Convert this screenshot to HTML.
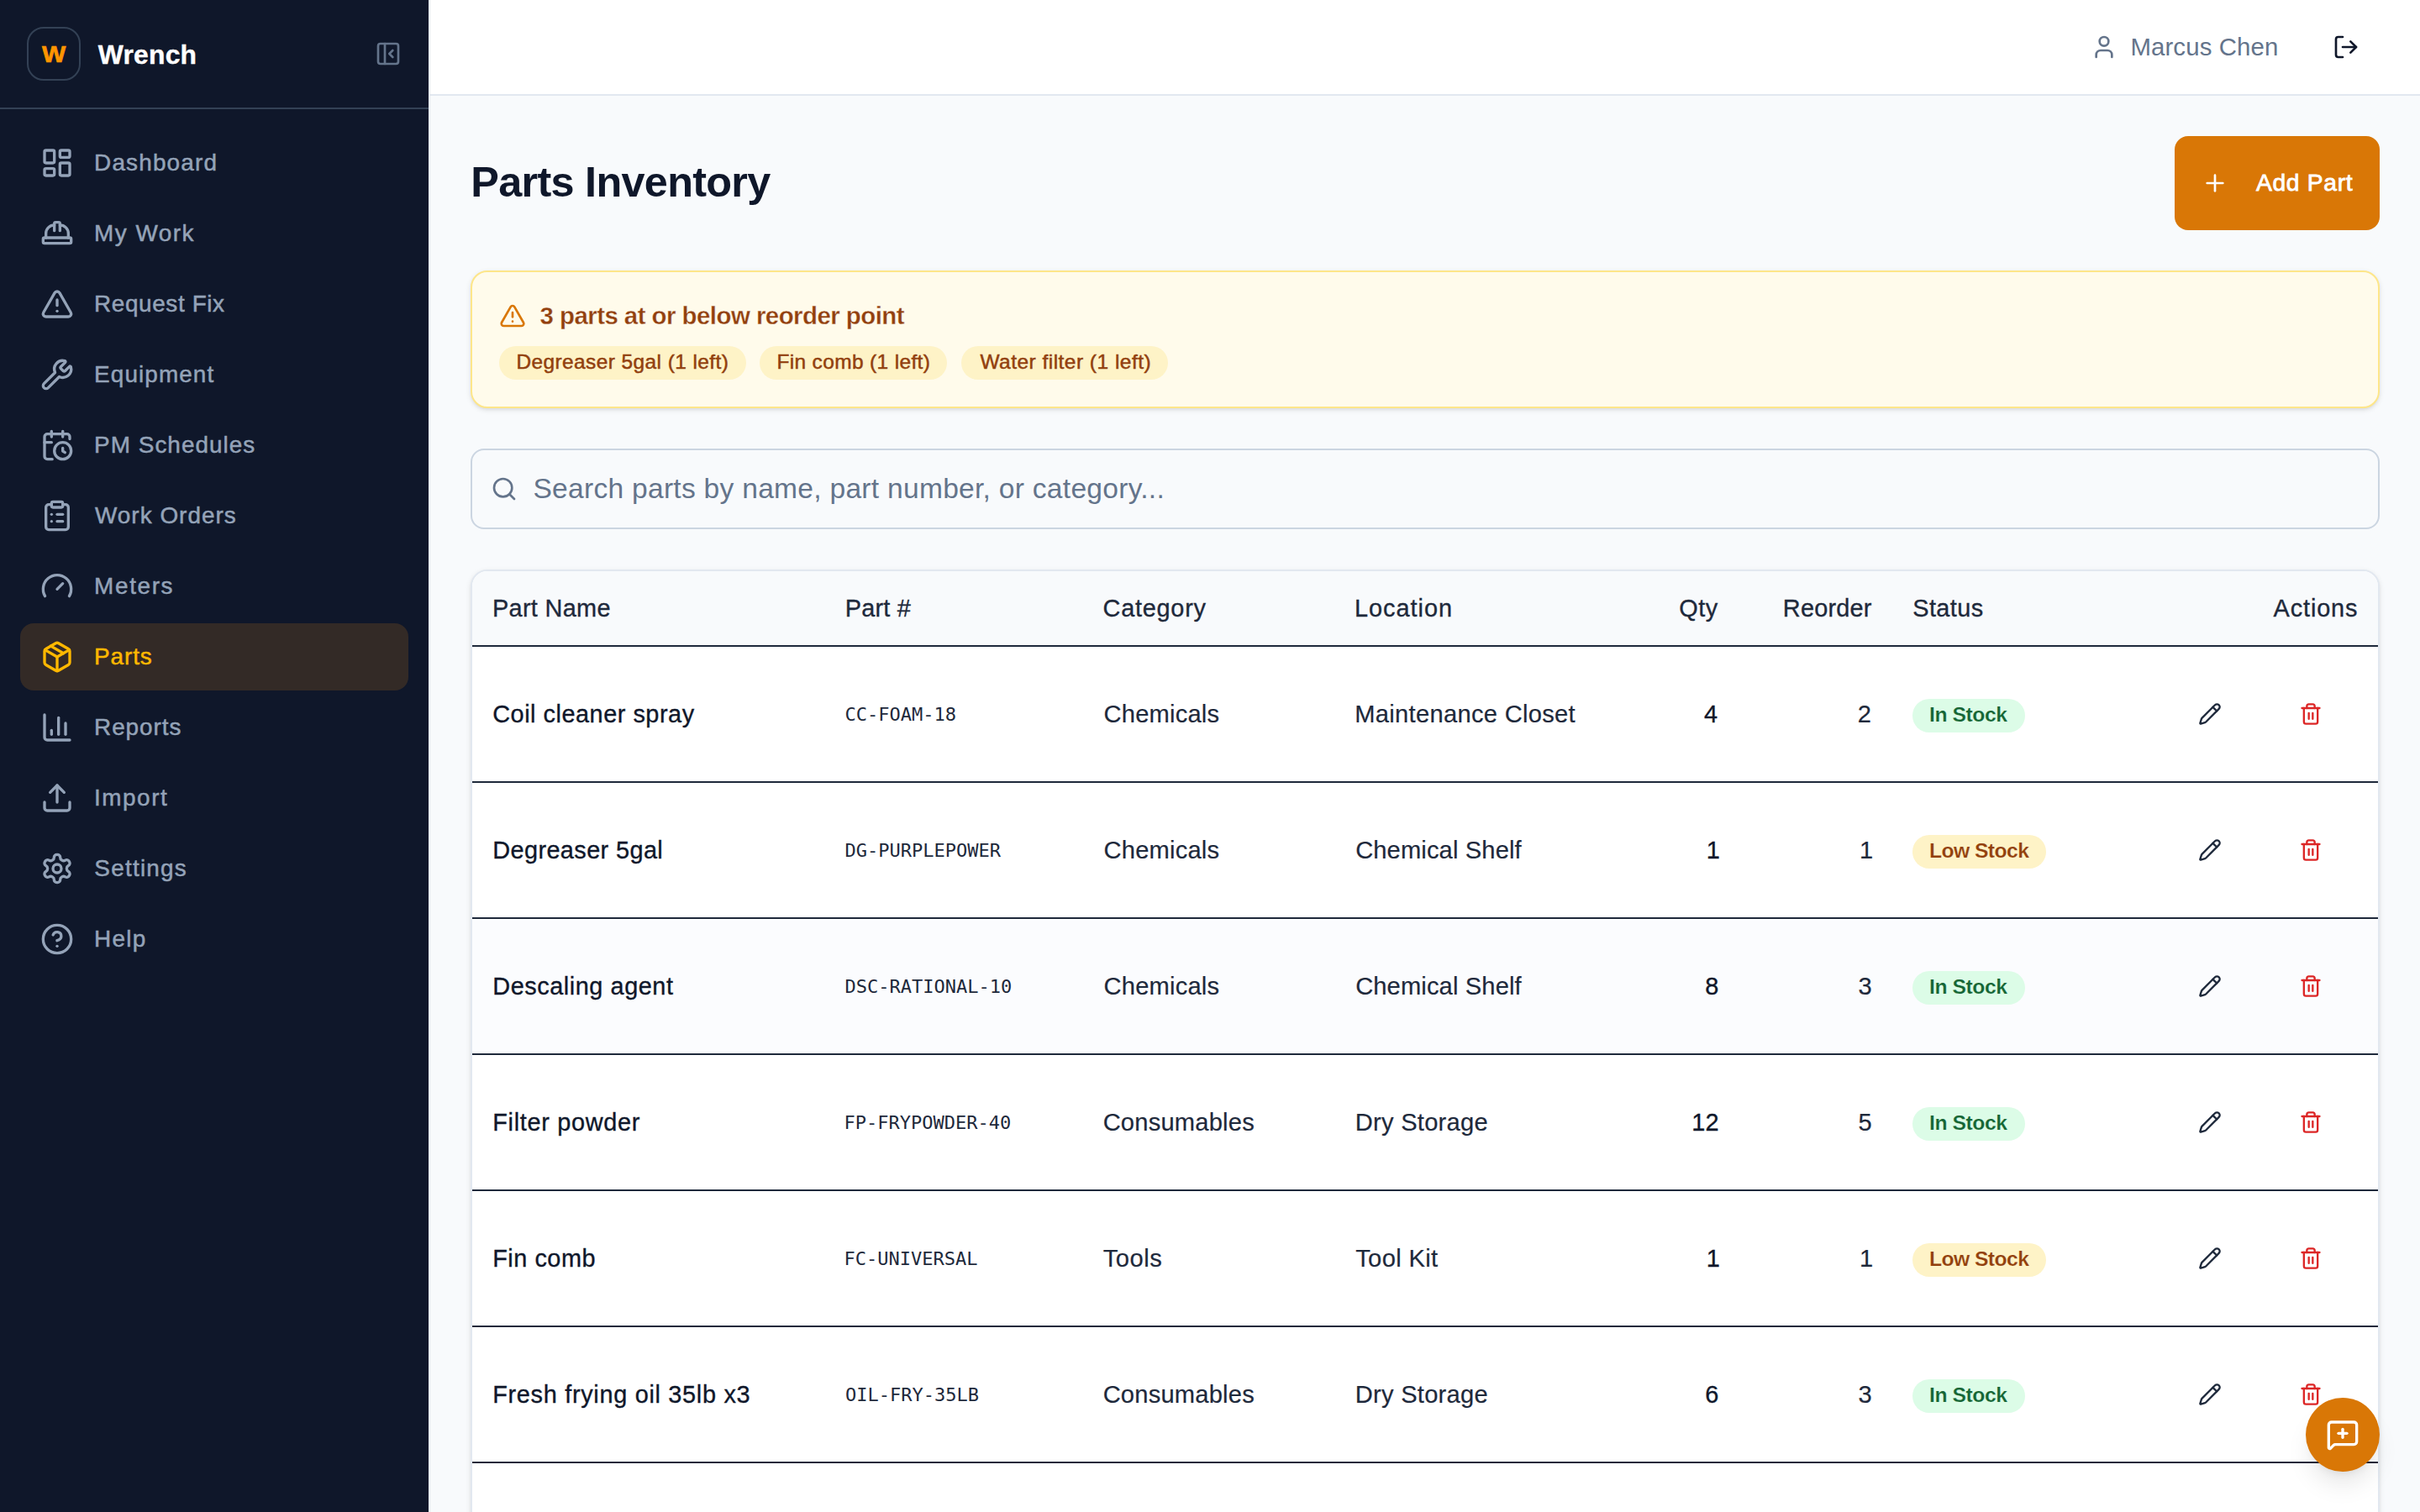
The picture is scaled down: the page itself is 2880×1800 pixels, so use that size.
<!DOCTYPE html>
<html lang="en"><head><meta charset="utf-8"><title>Wrench - Parts Inventory</title>
<style>
*{box-sizing:border-box}
html,body{margin:0;padding:0}
@media (max-width:1600px){html{zoom:.5}}
body{width:2880px;height:1800px;overflow:hidden;background:#f8fafc;font-family:"Liberation Sans",sans-serif;position:relative}
.abs,.t,.ic{position:absolute}
.t{white-space:pre;line-height:60px;height:60px;display:block}
.ic{display:block;overflow:visible}
aside{position:absolute;left:0;top:0;width:510px;height:1800px;background:#0f172a}
.sb-edge{position:absolute;left:510px;top:0;width:2px;height:1800px;background:#e6ebf3}
.sb-head{position:absolute;left:0;top:0;width:510px;height:130px;border-bottom:2px solid #334155}
.logo{position:absolute;left:32px;top:32px;width:64px;height:64px;border:2px solid #334155;border-radius:20px;background:#0f172a}
.nav-active{position:absolute;left:24px;top:742px;width:462px;height:80px;border-radius:16px;background:#332a26}
header{position:absolute;left:512px;top:0;width:2368px;height:114px;background:#fff;border-bottom:2px solid #e2e8f0}
.btn-add{position:absolute;left:2588px;top:162px;width:244px;height:112px;border-radius:16px;background:#d97706}
.alert{position:absolute;left:560px;top:322px;width:2272px;height:164px;border:2px solid #fde68a;border-radius:20px;background:#fffbeb;box-shadow:0 2px 6px rgba(0,0,0,.1),0 2px 4px -2px rgba(0,0,0,.1)}
.chip{position:absolute;top:412px;height:40px;border-radius:20px;background:#fef3c7}
.search{position:absolute;left:560px;top:534px;width:2272px;height:96px;border:2px solid #cbd5e1;border-radius:16px;background:#f8fafc}
.card{position:absolute;left:560px;top:678px;width:2272px;height:1400px;border:2px solid #e2e8f0;border-radius:20px;background:#fff;overflow:hidden;box-shadow:0 2px 6px rgba(0,0,0,.1),0 2px 4px -2px rgba(0,0,0,.1)}
.thead{position:absolute;left:0;top:0;width:2268px;height:90px;background:#f8fafc;border-bottom:2px solid #1e293b}
.row{position:absolute;left:0;width:2268px;height:162px;border-bottom:2px solid #1e293b;background:#fff}
.row.hov{background:#fbfcfe}
.badge{position:absolute;height:40px;border-radius:20px}
.b-in{background:#dcfce7}.b-low{background:#fef3c7}
.fab{position:absolute;left:2744px;top:1664px;width:88px;height:88px;border-radius:44px;background:#d97706;box-shadow:0 20px 30px -6px rgba(0,0,0,.1),0 8px 12px -8px rgba(0,0,0,.1)}
</style></head>
<body>
<aside>
<div class="sb-head"><div class="logo"></div><svg class="ic" style="left:446px;top:48px;color:#64748b" width="32" height="32" viewBox="0 0 24 24" fill="none" stroke="currentColor" stroke-width="2" stroke-linecap="round" stroke-linejoin="round"><rect width="18" height="18" x="3" y="3" rx="2"/><path d="M9 3v18"/><path d="m16 15-3-3 3-3"/></svg></div>
<nav>
<div class="nav-active"></div>
<svg class="ic" style="left:48px;top:174px;color:#94a3b8" width="40" height="40" viewBox="0 0 24 24" fill="none" stroke="currentColor" stroke-width="2" stroke-linecap="round" stroke-linejoin="round"><rect width="7" height="9" x="3" y="3" rx="1"/><rect width="7" height="5" x="14" y="3" rx="1"/><rect width="7" height="9" x="14" y="12" rx="1"/><rect width="7" height="5" x="3" y="16" rx="1"/></svg>
<svg class="ic" style="left:48px;top:258px;color:#94a3b8" width="40" height="40" viewBox="0 0 24 24" fill="none" stroke="currentColor" stroke-width="2" stroke-linecap="round" stroke-linejoin="round"><path d="M10 10V5a1 1 0 0 1 1-1h2a1 1 0 0 1 1 1v5"/><path d="M14 6a6 6 0 0 1 6 6v3"/><path d="M4 15v-3a6 6 0 0 1 6-6"/><rect x="2" y="15" width="20" height="4" rx="1"/></svg>
<svg class="ic" style="left:48px;top:342px;color:#94a3b8" width="40" height="40" viewBox="0 0 24 24" fill="none" stroke="currentColor" stroke-width="2" stroke-linecap="round" stroke-linejoin="round"><path d="m21.73 18-8-14a2 2 0 0 0-3.48 0l-8 14A2 2 0 0 0 4 21h16a2 2 0 0 0 1.73-3"/><path d="M12 9v4"/><path d="M12 17h.01"/></svg>
<svg class="ic" style="left:48px;top:426px;color:#94a3b8" width="40" height="40" viewBox="0 0 24 24" fill="none" stroke="currentColor" stroke-width="2" stroke-linecap="round" stroke-linejoin="round"><path d="M14.7 6.3a1 1 0 0 0 0 1.4l1.6 1.6a1 1 0 0 0 1.4 0l3.106-3.105c.32-.322.863-.22.983.218a6 6 0 0 1-8.259 7.057l-7.91 7.91a1 1 0 0 1-2.999-3l7.91-7.91a6 6 0 0 1 7.057-8.259c.438.12.54.662.219.984z"/></svg>
<svg class="ic" style="left:48px;top:510px;color:#94a3b8" width="40" height="40" viewBox="0 0 24 24" fill="none" stroke="currentColor" stroke-width="2" stroke-linecap="round" stroke-linejoin="round"><path d="M16 14v2.2l1.6 1"/><path d="M16 2v4"/><path d="M21 7.5V6a2 2 0 0 0-2-2H5a2 2 0 0 0-2 2v14a2 2 0 0 0 2 2h3.5"/><path d="M3 10h5"/><path d="M8 2v4"/><circle cx="16" cy="16" r="6"/></svg>
<svg class="ic" style="left:48px;top:594px;color:#94a3b8" width="40" height="40" viewBox="0 0 24 24" fill="none" stroke="currentColor" stroke-width="2" stroke-linecap="round" stroke-linejoin="round"><rect width="8" height="4" x="8" y="2" rx="1" ry="1"/><path d="M16 4h2a2 2 0 0 1 2 2v14a2 2 0 0 1-2 2H6a2 2 0 0 1-2-2V6a2 2 0 0 1 2-2h2"/><path d="M12 11h4"/><path d="M12 16h4"/><path d="M8 11h.01"/><path d="M8 16h.01"/></svg>
<svg class="ic" style="left:48px;top:678px;color:#94a3b8" width="40" height="40" viewBox="0 0 24 24" fill="none" stroke="currentColor" stroke-width="2" stroke-linecap="round" stroke-linejoin="round"><path d="m12 14 4-4"/><path d="M3.34 19a10 10 0 1 1 17.32 0"/></svg>
<svg class="ic" style="left:48px;top:762px;color:#ffb800" width="40" height="40" viewBox="0 0 24 24" fill="none" stroke="currentColor" stroke-width="2" stroke-linecap="round" stroke-linejoin="round"><path d="m7.5 4.27 9 5.15"/><path d="M21 8a2 2 0 0 0-1-1.73l-7-4a2 2 0 0 0-2 0l-7 4A2 2 0 0 0 3 8v8a2 2 0 0 0 1 1.73l7 4a2 2 0 0 0 2 0l7-4A2 2 0 0 0 21 16Z"/><path d="m3.3 7 8.7 5 8.7-5"/><path d="M12 22V12"/></svg>
<svg class="ic" style="left:48px;top:846px;color:#94a3b8" width="40" height="40" viewBox="0 0 24 24" fill="none" stroke="currentColor" stroke-width="2" stroke-linecap="round" stroke-linejoin="round"><path d="M3 3v16a2 2 0 0 0 2 2h16"/><path d="M18 17V9"/><path d="M13 17V5"/><path d="M8 17v-3"/></svg>
<svg class="ic" style="left:48px;top:930px;color:#94a3b8" width="40" height="40" viewBox="0 0 24 24" fill="none" stroke="currentColor" stroke-width="2" stroke-linecap="round" stroke-linejoin="round"><path d="M21 15v4a2 2 0 0 1-2 2H5a2 2 0 0 1-2-2v-4"/><polyline points="17 8 12 3 7 8"/><line x1="12" x2="12" y1="3" y2="15"/></svg>
<svg class="ic" style="left:48px;top:1014px;color:#94a3b8" width="40" height="40" viewBox="0 0 24 24" fill="none" stroke="currentColor" stroke-width="2" stroke-linecap="round" stroke-linejoin="round"><path d="M12.22 2h-.44a2 2 0 0 0-2 2v.18a2 2 0 0 1-1 1.73l-.43.25a2 2 0 0 1-2 0l-.15-.08a2 2 0 0 0-2.73.73l-.22.38a2 2 0 0 0 .73 2.73l.15.1a2 2 0 0 1 1 1.72v.51a2 2 0 0 1-1 1.74l-.15.09a2 2 0 0 0-.73 2.73l.22.38a2 2 0 0 0 2.73.73l.15-.08a2 2 0 0 1 2 0l.43.25a2 2 0 0 1 1 1.73V20a2 2 0 0 0 2 2h.44a2 2 0 0 0 2-2v-.18a2 2 0 0 1 1-1.73l.43-.25a2 2 0 0 1 2 0l.15.08a2 2 0 0 0 2.73-.73l.22-.39a2 2 0 0 0-.73-2.73l-.15-.08a2 2 0 0 1-1-1.74v-.5a2 2 0 0 1 1-1.74l.15-.09a2 2 0 0 0 .73-2.73l-.22-.38a2 2 0 0 0-2.73-.73l-.15.08a2 2 0 0 1-2 0l-.43-.25a2 2 0 0 1-1-1.73V4a2 2 0 0 0-2-2z"/><circle cx="12" cy="12" r="3"/></svg>
<svg class="ic" style="left:48px;top:1098px;color:#94a3b8" width="40" height="40" viewBox="0 0 24 24" fill="none" stroke="currentColor" stroke-width="2" stroke-linecap="round" stroke-linejoin="round"><circle cx="12" cy="12" r="10"/><path d="M9.09 9a3 3 0 0 1 5.83 1c0 2-3 3-3 3"/><path d="M12 17h.01"/></svg>
</nav>
</aside>
<div class="sb-edge"></div>
<div id="sbtext"><span class="t" style="left:49.67px;top:33.53px;font-size:28.39px;color:#ff9500;font-weight:700;transform:scaleX(1.0557);transform-origin:0 0;-webkit-text-stroke:0.7px #ff9500;">W</span><span class="t" style="left:116.80px;top:35.22px;font-size:31.80px;color:#ffffff;letter-spacing:0.239px;font-weight:700;-webkit-text-stroke:0.4px #ffffff;">Wrench</span>
<span class="t" style="left:112.12px;top:164.03px;font-size:27.90px;color:#94a3b8;letter-spacing:1.171px;-webkit-text-stroke:0.5px #94a3b8;">Dashboard</span>
<span class="t" style="left:112.12px;top:248.03px;font-size:27.90px;color:#94a3b8;letter-spacing:1.470px;-webkit-text-stroke:0.5px #94a3b8;">My Work</span>
<span class="t" style="left:112.12px;top:332.03px;font-size:27.90px;color:#94a3b8;letter-spacing:0.613px;-webkit-text-stroke:0.5px #94a3b8;">Request Fix</span>
<span class="t" style="left:112.12px;top:416.03px;font-size:27.90px;color:#94a3b8;letter-spacing:1.089px;-webkit-text-stroke:0.5px #94a3b8;">Equipment</span>
<span class="t" style="left:112.12px;top:500.03px;font-size:27.90px;color:#94a3b8;letter-spacing:1.025px;-webkit-text-stroke:0.5px #94a3b8;">PM Schedules</span>
<span class="t" style="left:113.00px;top:584.03px;font-size:27.90px;color:#94a3b8;letter-spacing:1.018px;-webkit-text-stroke:0.5px #94a3b8;">Work Orders</span>
<span class="t" style="left:112.12px;top:668.03px;font-size:27.90px;color:#94a3b8;letter-spacing:1.638px;-webkit-text-stroke:0.5px #94a3b8;">Meters</span>
<span class="t" style="left:112.12px;top:752.03px;font-size:27.90px;color:#ffb800;letter-spacing:0.884px;-webkit-text-stroke:0.5px #ffb800;">Parts</span>
<span class="t" style="left:112.12px;top:836.03px;font-size:27.90px;color:#94a3b8;letter-spacing:0.928px;-webkit-text-stroke:0.5px #94a3b8;">Reports</span>
<span class="t" style="left:112.12px;top:920.03px;font-size:27.90px;color:#94a3b8;letter-spacing:1.504px;-webkit-text-stroke:0.5px #94a3b8;">Import</span>
<span class="t" style="left:112.33px;top:1004.03px;font-size:27.90px;color:#94a3b8;letter-spacing:1.234px;-webkit-text-stroke:0.5px #94a3b8;">Settings</span>
<span class="t" style="left:112.12px;top:1088.03px;font-size:27.90px;color:#94a3b8;letter-spacing:1.245px;-webkit-text-stroke:0.5px #94a3b8;">Help</span></div>
<header></header>
<svg class="ic" style="left:2488px;top:40px;color:#64748b" width="32" height="32" viewBox="0 0 24 24" fill="none" stroke="currentColor" stroke-width="2" stroke-linecap="round" stroke-linejoin="round"><path d="M19 21v-2a4 4 0 0 0-4-4H9a4 4 0 0 0-4 4v2"/><circle cx="12" cy="7" r="4"/></svg><span class="t" style="left:2535.40px;top:25.73px;font-size:29.40px;color:#64748b;letter-spacing:0.121px;">Marcus Chen</span><svg class="ic" style="left:2776px;top:40px;color:#0f172a" width="32" height="32" viewBox="0 0 24 24" fill="none" stroke="currentColor" stroke-width="2" stroke-linecap="round" stroke-linejoin="round"><path d="M9 21H5a2 2 0 0 1-2-2V5a2 2 0 0 1 2-2h4"/><polyline points="16 17 21 12 16 7"/><line x1="21" x2="9" y1="12" y2="12"/></svg>
<main>
<h1 style="margin:0;font-size:inherit"><span class="t" style="left:560.25px;top:186.97px;font-size:50.40px;color:#0f172a;letter-spacing:-0.700px;font-weight:700;">Parts Inventory</span></h1>
<div class="btn-add"></div><svg class="ic" style="left:2620px;top:202px;color:#ffffff" width="32" height="32" viewBox="0 0 24 24" fill="none" stroke="currentColor" stroke-width="2" stroke-linecap="round" stroke-linejoin="round"><path d="M5 12h14"/><path d="M12 5v14"/></svg><span class="t" style="left:2684.90px;top:187.13px;font-size:28.24px;color:#ffffff;letter-spacing:0.703px;-webkit-text-stroke:0.8px #ffffff;">Add Part</span>
<section class="alert"></section>
<svg class="ic" style="left:594px;top:360px;color:#d97706" width="32" height="32" viewBox="0 0 24 24" fill="none" stroke="currentColor" stroke-width="2" stroke-linecap="round" stroke-linejoin="round"><path d="m21.73 18-8-14a2 2 0 0 0-3.48 0l-8 14A2 2 0 0 0 4 21h16a2 2 0 0 0 1.73-3"/><path d="M12 9v4"/><path d="M12 17h.01"/></svg><span class="t" style="left:642.49px;top:346.03px;font-size:29.40px;color:#92400e;letter-spacing:-0.521px;font-weight:700;-webkit-text-stroke:0.3px #fffbeb;">3 parts at or below reorder point</span>
<div class="chip" style="left:594.4px;width:293.6px"></div><span class="t" style="left:614.39px;top:401.14px;font-size:24.48px;color:#92400e;letter-spacing:0.412px;-webkit-text-stroke:0.5px #92400e;">Degreaser 5gal (1 left)</span>
<div class="chip" style="left:904.4px;width:222.6px"></div><span class="t" style="left:924.39px;top:401.14px;font-size:24.48px;color:#92400e;letter-spacing:0.361px;-webkit-text-stroke:0.5px #92400e;">Fin comb (1 left)</span>
<div class="chip" style="left:1144.2px;width:245.6px"></div><span class="t" style="left:1166.40px;top:401.14px;font-size:24.48px;color:#92400e;letter-spacing:0.485px;-webkit-text-stroke:0.5px #92400e;">Water filter (1 left)</span>
<div class="search"></div><svg class="ic" style="left:584px;top:566px;color:#64748b" width="32" height="32" viewBox="0 0 24 24" fill="none" stroke="currentColor" stroke-width="2" stroke-linecap="round" stroke-linejoin="round"><circle cx="11" cy="11" r="8"/><path d="m21 21-4.3-4.3"/></svg><span class="t" style="left:634.45px;top:552.22px;font-size:33.60px;color:#64748b;letter-spacing:0.268px;">Search parts by name, part number, or category...</span>
<div class="card"><div class="thead"></div>
<div class="row" style="top:90px"></div>
<div class="row" style="top:252px"></div>
<div class="row hov" style="top:414px"></div>
<div class="row" style="top:576px"></div>
<div class="row" style="top:738px"></div>
<div class="row" style="top:900px"></div>
<div class="row" style="top:1062px"></div>
<div class="row" style="top:1224px"></div>
</div>
<div id="th"><span class="t" style="left:585.94px;top:693.73px;font-size:28.89px;color:#1e293b;letter-spacing:0.318px;-webkit-text-stroke:0.35px #1e293b;">Part Name</span><span class="t" style="left:1005.84px;top:693.73px;font-size:28.89px;color:#1e293b;letter-spacing:0.198px;-webkit-text-stroke:0.35px #1e293b;">Part #</span><span class="t" style="left:1312.55px;top:693.73px;font-size:28.89px;color:#1e293b;letter-spacing:0.746px;-webkit-text-stroke:0.35px #1e293b;">Category</span><span class="t" style="left:1611.94px;top:693.73px;font-size:28.89px;color:#1e293b;letter-spacing:0.992px;-webkit-text-stroke:0.35px #1e293b;">Location</span><span class="t" style="left:1998.35px;top:693.73px;font-size:28.89px;color:#1e293b;letter-spacing:0.454px;-webkit-text-stroke:0.35px #1e293b;">Qty</span><span class="t" style="left:2121.84px;top:693.73px;font-size:28.89px;color:#1e293b;letter-spacing:0.220px;-webkit-text-stroke:0.35px #1e293b;">Reorder</span><span class="t" style="left:2276.20px;top:693.73px;font-size:28.89px;color:#1e293b;letter-spacing:0.440px;-webkit-text-stroke:0.35px #1e293b;">Status</span><span class="t" style="left:2705.60px;top:693.73px;font-size:28.89px;color:#1e293b;letter-spacing:0.860px;-webkit-text-stroke:0.35px #1e293b;">Actions</span></div>
<div class="tr"><span class="t" style="left:586.25px;top:819.73px;font-size:28.89px;color:#0f172a;letter-spacing:0.513px;-webkit-text-stroke:0.35px #0f172a;">Coil cleaner spray</span><span class="t" style="left:1005.62px;top:821.31px;font-size:22.00px;color:#1e293b;font-family:'DejaVu Sans Mono', 'Liberation Mono', monospace;">CC-FOAM-18</span><span class="t" style="left:1313.54px;top:819.73px;font-size:29.11px;color:#1e293b;letter-spacing:0.211px;-webkit-text-stroke:0.2px #1e293b;">Chemicals</span><span class="t" style="left:1612.23px;top:819.73px;font-size:29.11px;color:#1e293b;letter-spacing:0.305px;-webkit-text-stroke:0.2px #1e293b;">Maintenance Closet</span><span class="t" style="left:2027.98px;top:819.73px;font-size:28.89px;color:#0f172a;-webkit-text-stroke:0.35px #0f172a;">4</span><span class="t" style="left:2210.69px;top:819.73px;font-size:29.11px;color:#1e293b;-webkit-text-stroke:0.2px #1e293b;">2</span><div class="badge b-in" style="left:2276.2px;top:831.8px;width:133.8px"></div><span class="t" style="left:2296.06px;top:821.14px;font-size:24.68px;color:#166534;letter-spacing:-0.442px;font-weight:700;-webkit-text-stroke:0.2px #dcfce7;">In Stock</span><svg class="ic" style="left:2616px;top:836px;color:#1e293b" width="28" height="28" viewBox="0 0 24 24" fill="none" stroke="currentColor" stroke-width="2" stroke-linecap="round" stroke-linejoin="round"><path d="M21.174 6.812a1 1 0 0 0-3.986-3.987L3.842 16.174a2 2 0 0 0-.5.83l-1.321 4.352a.5.5 0 0 0 .623.622l4.353-1.32a2 2 0 0 0 .83-.497z"/><path d="m15 5 4 4"/></svg><svg class="ic" style="left:2736px;top:836px;color:#dc2626" width="28" height="28" viewBox="0 0 24 24" fill="none" stroke="currentColor" stroke-width="2" stroke-linecap="round" stroke-linejoin="round"><path d="M10 11v6"/><path d="M14 11v6"/><path d="M19 6v14a2 2 0 0 1-2 2H7a2 2 0 0 1-2-2V6"/><path d="M3 6h18"/><path d="M8 6V4a2 2 0 0 1 2-2h4a2 2 0 0 1 2 2v2"/></svg></div>
<div class="tr"><span class="t" style="left:586.24px;top:981.73px;font-size:28.89px;color:#0f172a;letter-spacing:0.393px;-webkit-text-stroke:0.35px #0f172a;">Degreaser 5gal</span><span class="t" style="left:1005.62px;top:983.31px;font-size:22.00px;color:#1e293b;font-family:'DejaVu Sans Mono', 'Liberation Mono', monospace;">DG-PURPLEPOWER</span><span class="t" style="left:1313.54px;top:981.73px;font-size:29.11px;color:#1e293b;letter-spacing:0.211px;-webkit-text-stroke:0.2px #1e293b;">Chemicals</span><span class="t" style="left:1613.14px;top:981.73px;font-size:29.11px;color:#1e293b;letter-spacing:0.138px;-webkit-text-stroke:0.2px #1e293b;">Chemical Shelf</span><span class="t" style="left:2030.73px;top:981.73px;font-size:28.89px;color:#0f172a;-webkit-text-stroke:0.35px #0f172a;">1</span><span class="t" style="left:2212.99px;top:981.73px;font-size:29.11px;color:#1e293b;-webkit-text-stroke:0.2px #1e293b;">1</span><div class="badge b-low" style="left:2276.2px;top:993.8px;width:159.2px"></div><span class="t" style="left:2296.06px;top:983.14px;font-size:24.68px;color:#92400e;letter-spacing:-0.563px;font-weight:700;-webkit-text-stroke:0.2px #fef3c7;">Low Stock</span><svg class="ic" style="left:2616px;top:998px;color:#1e293b" width="28" height="28" viewBox="0 0 24 24" fill="none" stroke="currentColor" stroke-width="2" stroke-linecap="round" stroke-linejoin="round"><path d="M21.174 6.812a1 1 0 0 0-3.986-3.987L3.842 16.174a2 2 0 0 0-.5.83l-1.321 4.352a.5.5 0 0 0 .623.622l4.353-1.32a2 2 0 0 0 .83-.497z"/><path d="m15 5 4 4"/></svg><svg class="ic" style="left:2736px;top:998px;color:#dc2626" width="28" height="28" viewBox="0 0 24 24" fill="none" stroke="currentColor" stroke-width="2" stroke-linecap="round" stroke-linejoin="round"><path d="M10 11v6"/><path d="M14 11v6"/><path d="M19 6v14a2 2 0 0 1-2 2H7a2 2 0 0 1-2-2V6"/><path d="M3 6h18"/><path d="M8 6V4a2 2 0 0 1 2-2h4a2 2 0 0 1 2 2v2"/></svg></div>
<div class="tr"><span class="t" style="left:586.24px;top:1143.73px;font-size:28.89px;color:#0f172a;letter-spacing:0.547px;-webkit-text-stroke:0.35px #0f172a;">Descaling agent</span><span class="t" style="left:1005.62px;top:1145.31px;font-size:22.00px;color:#1e293b;font-family:'DejaVu Sans Mono', 'Liberation Mono', monospace;">DSC-RATIONAL-10</span><span class="t" style="left:1313.54px;top:1143.73px;font-size:29.11px;color:#1e293b;letter-spacing:0.211px;-webkit-text-stroke:0.2px #1e293b;">Chemicals</span><span class="t" style="left:1613.14px;top:1143.73px;font-size:29.11px;color:#1e293b;letter-spacing:0.138px;-webkit-text-stroke:0.2px #1e293b;">Chemical Shelf</span><span class="t" style="left:2029.23px;top:1143.73px;font-size:28.89px;color:#0f172a;-webkit-text-stroke:0.35px #0f172a;">8</span><span class="t" style="left:2211.49px;top:1143.73px;font-size:29.11px;color:#1e293b;-webkit-text-stroke:0.2px #1e293b;">3</span><div class="badge b-in" style="left:2276.2px;top:1155.8px;width:133.8px"></div><span class="t" style="left:2296.06px;top:1145.14px;font-size:24.68px;color:#166534;letter-spacing:-0.442px;font-weight:700;-webkit-text-stroke:0.2px #dcfce7;">In Stock</span><svg class="ic" style="left:2616px;top:1160px;color:#1e293b" width="28" height="28" viewBox="0 0 24 24" fill="none" stroke="currentColor" stroke-width="2" stroke-linecap="round" stroke-linejoin="round"><path d="M21.174 6.812a1 1 0 0 0-3.986-3.987L3.842 16.174a2 2 0 0 0-.5.83l-1.321 4.352a.5.5 0 0 0 .623.622l4.353-1.32a2 2 0 0 0 .83-.497z"/><path d="m15 5 4 4"/></svg><svg class="ic" style="left:2736px;top:1160px;color:#dc2626" width="28" height="28" viewBox="0 0 24 24" fill="none" stroke="currentColor" stroke-width="2" stroke-linecap="round" stroke-linejoin="round"><path d="M10 11v6"/><path d="M14 11v6"/><path d="M19 6v14a2 2 0 0 1-2 2H7a2 2 0 0 1-2-2V6"/><path d="M3 6h18"/><path d="M8 6V4a2 2 0 0 1 2-2h4a2 2 0 0 1 2 2v2"/></svg></div>
<div class="tr"><span class="t" style="left:586.24px;top:1305.73px;font-size:28.89px;color:#0f172a;letter-spacing:0.692px;-webkit-text-stroke:0.35px #0f172a;">Filter powder</span><span class="t" style="left:1004.59px;top:1307.31px;font-size:22.00px;color:#1e293b;font-family:'DejaVu Sans Mono', 'Liberation Mono', monospace;">FP-FRYPOWDER-40</span><span class="t" style="left:1312.64px;top:1305.73px;font-size:29.11px;color:#1e293b;letter-spacing:0.209px;-webkit-text-stroke:0.2px #1e293b;">Consumables</span><span class="t" style="left:1612.83px;top:1305.73px;font-size:29.11px;color:#1e293b;letter-spacing:0.244px;-webkit-text-stroke:0.2px #1e293b;">Dry Storage</span><span class="t" style="left:2013.33px;top:1305.73px;font-size:28.89px;color:#0f172a;-webkit-text-stroke:0.35px #0f172a;">12</span><span class="t" style="left:2211.49px;top:1305.73px;font-size:29.11px;color:#1e293b;-webkit-text-stroke:0.2px #1e293b;">5</span><div class="badge b-in" style="left:2276.2px;top:1317.8px;width:133.8px"></div><span class="t" style="left:2296.06px;top:1307.14px;font-size:24.68px;color:#166534;letter-spacing:-0.442px;font-weight:700;-webkit-text-stroke:0.2px #dcfce7;">In Stock</span><svg class="ic" style="left:2616px;top:1322px;color:#1e293b" width="28" height="28" viewBox="0 0 24 24" fill="none" stroke="currentColor" stroke-width="2" stroke-linecap="round" stroke-linejoin="round"><path d="M21.174 6.812a1 1 0 0 0-3.986-3.987L3.842 16.174a2 2 0 0 0-.5.83l-1.321 4.352a.5.5 0 0 0 .623.622l4.353-1.32a2 2 0 0 0 .83-.497z"/><path d="m15 5 4 4"/></svg><svg class="ic" style="left:2736px;top:1322px;color:#dc2626" width="28" height="28" viewBox="0 0 24 24" fill="none" stroke="currentColor" stroke-width="2" stroke-linecap="round" stroke-linejoin="round"><path d="M10 11v6"/><path d="M14 11v6"/><path d="M19 6v14a2 2 0 0 1-2 2H7a2 2 0 0 1-2-2V6"/><path d="M3 6h18"/><path d="M8 6V4a2 2 0 0 1 2-2h4a2 2 0 0 1 2 2v2"/></svg></div>
<div class="tr"><span class="t" style="left:586.24px;top:1467.73px;font-size:28.89px;color:#0f172a;letter-spacing:0.502px;-webkit-text-stroke:0.35px #0f172a;">Fin comb</span><span class="t" style="left:1004.59px;top:1469.31px;font-size:22.00px;color:#1e293b;font-family:'DejaVu Sans Mono', 'Liberation Mono', monospace;">FC-UNIVERSAL</span><span class="t" style="left:1312.65px;top:1467.73px;font-size:29.11px;color:#1e293b;letter-spacing:0.577px;-webkit-text-stroke:0.2px #1e293b;">Tools</span><span class="t" style="left:1613.15px;top:1467.73px;font-size:29.11px;color:#1e293b;letter-spacing:0.371px;-webkit-text-stroke:0.2px #1e293b;">Tool Kit</span><span class="t" style="left:2030.73px;top:1467.73px;font-size:28.89px;color:#0f172a;-webkit-text-stroke:0.35px #0f172a;">1</span><span class="t" style="left:2212.99px;top:1467.73px;font-size:29.11px;color:#1e293b;-webkit-text-stroke:0.2px #1e293b;">1</span><div class="badge b-low" style="left:2276.2px;top:1479.8px;width:159.2px"></div><span class="t" style="left:2296.06px;top:1469.14px;font-size:24.68px;color:#92400e;letter-spacing:-0.563px;font-weight:700;-webkit-text-stroke:0.2px #fef3c7;">Low Stock</span><svg class="ic" style="left:2616px;top:1484px;color:#1e293b" width="28" height="28" viewBox="0 0 24 24" fill="none" stroke="currentColor" stroke-width="2" stroke-linecap="round" stroke-linejoin="round"><path d="M21.174 6.812a1 1 0 0 0-3.986-3.987L3.842 16.174a2 2 0 0 0-.5.83l-1.321 4.352a.5.5 0 0 0 .623.622l4.353-1.32a2 2 0 0 0 .83-.497z"/><path d="m15 5 4 4"/></svg><svg class="ic" style="left:2736px;top:1484px;color:#dc2626" width="28" height="28" viewBox="0 0 24 24" fill="none" stroke="currentColor" stroke-width="2" stroke-linecap="round" stroke-linejoin="round"><path d="M10 11v6"/><path d="M14 11v6"/><path d="M19 6v14a2 2 0 0 1-2 2H7a2 2 0 0 1-2-2V6"/><path d="M3 6h18"/><path d="M8 6V4a2 2 0 0 1 2-2h4a2 2 0 0 1 2 2v2"/></svg></div>
<div class="tr"><span class="t" style="left:586.24px;top:1629.73px;font-size:28.89px;color:#0f172a;letter-spacing:0.690px;-webkit-text-stroke:0.35px #0f172a;">Fresh frying oil 35lb x3</span><span class="t" style="left:1005.97px;top:1631.31px;font-size:22.00px;color:#1e293b;font-family:'DejaVu Sans Mono', 'Liberation Mono', monospace;">OIL-FRY-35LB</span><span class="t" style="left:1312.64px;top:1629.73px;font-size:29.11px;color:#1e293b;letter-spacing:0.209px;-webkit-text-stroke:0.2px #1e293b;">Consumables</span><span class="t" style="left:1612.83px;top:1629.73px;font-size:29.11px;color:#1e293b;letter-spacing:0.244px;-webkit-text-stroke:0.2px #1e293b;">Dry Storage</span><span class="t" style="left:2029.23px;top:1629.73px;font-size:28.89px;color:#0f172a;-webkit-text-stroke:0.35px #0f172a;">6</span><span class="t" style="left:2211.49px;top:1629.73px;font-size:29.11px;color:#1e293b;-webkit-text-stroke:0.2px #1e293b;">3</span><div class="badge b-in" style="left:2276.2px;top:1641.8px;width:133.8px"></div><span class="t" style="left:2296.06px;top:1631.14px;font-size:24.68px;color:#166534;letter-spacing:-0.442px;font-weight:700;-webkit-text-stroke:0.2px #dcfce7;">In Stock</span><svg class="ic" style="left:2616px;top:1646px;color:#1e293b" width="28" height="28" viewBox="0 0 24 24" fill="none" stroke="currentColor" stroke-width="2" stroke-linecap="round" stroke-linejoin="round"><path d="M21.174 6.812a1 1 0 0 0-3.986-3.987L3.842 16.174a2 2 0 0 0-.5.83l-1.321 4.352a.5.5 0 0 0 .623.622l4.353-1.32a2 2 0 0 0 .83-.497z"/><path d="m15 5 4 4"/></svg><svg class="ic" style="left:2736px;top:1646px;color:#dc2626" width="28" height="28" viewBox="0 0 24 24" fill="none" stroke="currentColor" stroke-width="2" stroke-linecap="round" stroke-linejoin="round"><path d="M10 11v6"/><path d="M14 11v6"/><path d="M19 6v14a2 2 0 0 1-2 2H7a2 2 0 0 1-2-2V6"/><path d="M3 6h18"/><path d="M8 6V4a2 2 0 0 1 2-2h4a2 2 0 0 1 2 2v2"/></svg></div>
</main>
<div class="fab"></div><svg class="ic" style="left:2768px;top:1688px;color:#ffffff" width="40" height="40" viewBox="0 0 24 24" fill="none" stroke="currentColor" stroke-width="2" stroke-linecap="round" stroke-linejoin="round"><path d="M22 17a2 2 0 0 1-2 2H6.828a2 2 0 0 0-1.414.586l-2.202 2.202A.71.71 0 0 1 2 21.286V5a2 2 0 0 1 2-2h16a2 2 0 0 1 2 2z"/><path d="M12 8v6"/><path d="M9 11h6"/></svg>
</body></html>
